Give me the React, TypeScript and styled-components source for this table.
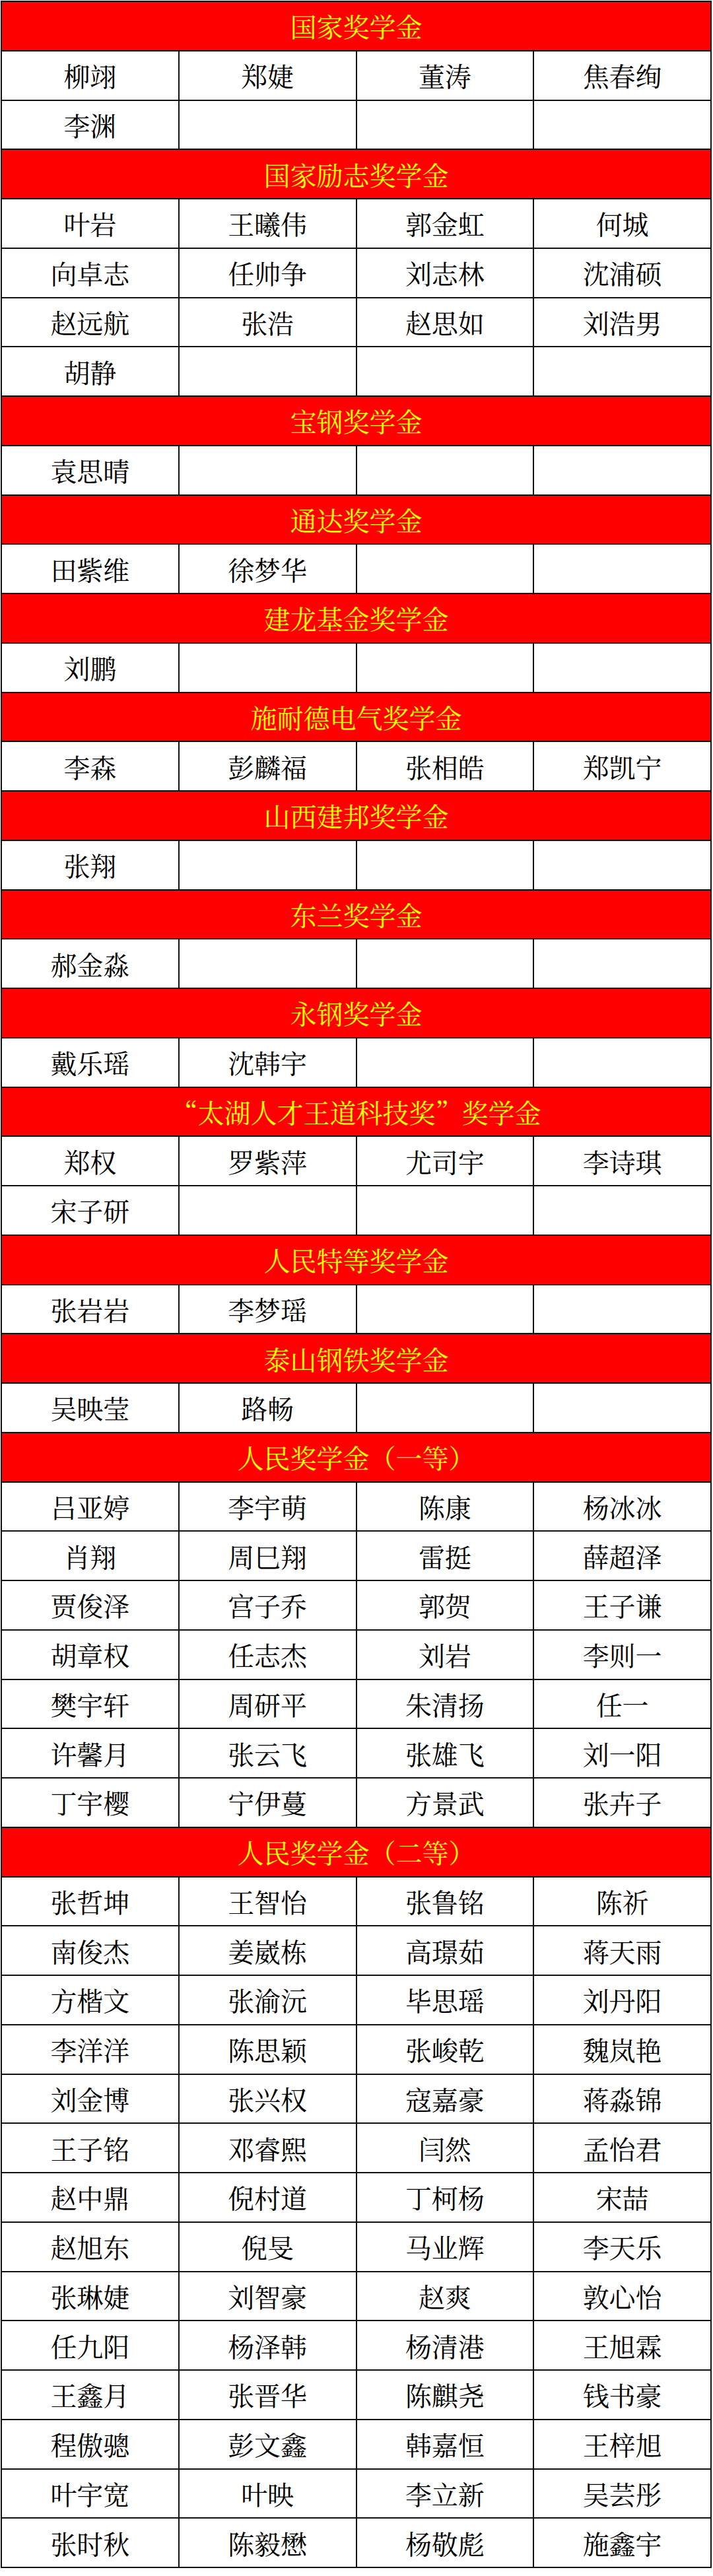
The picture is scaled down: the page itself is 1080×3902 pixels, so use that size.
import React from "react";
import styled, { createGlobalStyle } from "styled-components";

const GlobalStyle = createGlobalStyle`
  html, body { margin: 0; padding: 0; background: #ffffff; }
  body { font-family: "Noto Serif CJK SC", "Noto Sans CJK SC", "Liberation Serif", serif; }
`;

const Page = styled.div`
  padding: 1px 0 0 1px;
  width: 1080px;
  box-sizing: border-box;
`;

const Grid = styled.div`
  display: grid;
  grid-template-columns: repeat(4, 1fr);
  width: 1077px;
  box-sizing: border-box;
  border-top: 2px solid #111;
  border-left: 2px solid #111;
`;

const Cell = styled.div`
  height: 74.75px;
  box-sizing: border-box;
  border-right: 2px solid #111;
  border-bottom: 2px solid #111;
  display: flex;
  align-items: center;
  justify-content: center;
  font-size: 40px;
  line-height: 1;
  color: #000;
  background: #fff;
  white-space: nowrap;
`;

const Header = styled(Cell)`
  grid-column: 1 / -1;
  background: #ff0000;
  color: #ffff00;
`;

type Section = { title: string; names: string[] };

const sections: Section[] = [
  { title: "国家奖学金", names: ["柳翊", "郑婕", "董涛", "焦春绚", "李渊"] },
  {
    title: "国家励志奖学金",
    names: ["叶岩", "王曦伟", "郭金虹", "何城", "向卓志", "任帅争", "刘志林", "沈浦硕", "赵远航", "张浩", "赵思如", "刘浩男", "胡静"],
  },
  { title: "宝钢奖学金", names: ["袁思晴"] },
  { title: "通达奖学金", names: ["田紫维", "徐梦华"] },
  { title: "建龙基金奖学金", names: ["刘鹏"] },
  { title: "施耐德电气奖学金", names: ["李森", "彭麟福", "张相皓", "郑凯宁"] },
  { title: "山西建邦奖学金", names: ["张翔"] },
  { title: "东兰奖学金", names: ["郝金淼"] },
  { title: "永钢奖学金", names: ["戴乐瑶", "沈韩宇"] },
  { title: "“太湖人才王道科技奖”奖学金", names: ["郑权", "罗紫萍", "尤司宇", "李诗琪", "宋子研"] },
  { title: "人民特等奖学金", names: ["张岩岩", "李梦瑶"] },
  { title: "泰山钢铁奖学金", names: ["吴映莹", "路畅"] },
  {
    title: "人民奖学金（一等）",
    names: [
      "吕亚婷", "李宇萌", "陈康", "杨冰冰",
      "肖翔", "周巳翔", "雷挺", "薛超泽",
      "贾俊泽", "宫子乔", "郭贺", "王子谦",
      "胡章权", "任志杰", "刘岩", "李则一",
      "樊宇轩", "周研平", "朱清扬", "任一",
      "许馨月", "张云飞", "张雄飞", "刘一阳",
      "丁宇樱", "宁伊蔓", "方景武", "张卉子",
    ],
  },
  {
    title: "人民奖学金（二等）",
    names: [
      "张哲坤", "王智怡", "张鲁铭", "陈祈",
      "南俊杰", "姜崴栋", "高璟茹", "蒋天雨",
      "方楷文", "张渝沅", "毕思瑶", "刘丹阳",
      "李洋洋", "陈思颖", "张峻乾", "魏岚艳",
      "刘金博", "张兴权", "寇嘉豪", "蒋淼锦",
      "王子铭", "邓睿熙", "闫然", "孟怡君",
      "赵中鼎", "倪村道", "丁柯杨", "宋喆",
      "赵旭东", "倪旻", "马业辉", "李天乐",
      "张琳婕", "刘智豪", "赵爽", "敦心怡",
      "任九阳", "杨泽韩", "杨清港", "王旭霖",
      "王鑫月", "张晋华", "陈麒尧", "钱书豪",
      "程傲骢", "彭文鑫", "韩嘉恒", "王梓旭",
      "叶宇宽", "叶映", "李立新", "吴芸彤",
      "张时秋", "陈毅懋", "杨敬彪", "施鑫宇",
    ],
  },
];

function padded(names: string[]): string[] {
  const out = [...names];
  while (out.length % 4 !== 0) out.push("");
  return out;
}

export default function App() {
  return (
    <Page>
      <GlobalStyle />
      <Grid>
        {sections.map((s, si) => (
          <React.Fragment key={si}>
            <Header>{s.title}</Header>
            {padded(s.names).map((n, ni) => (
              <Cell key={ni}>{n}</Cell>
            ))}
          </React.Fragment>
        ))}
      </Grid>
    </Page>
  );
}
